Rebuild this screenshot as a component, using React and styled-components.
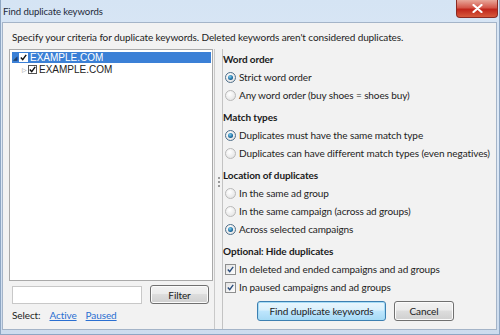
import React from "react";
import styled, { createGlobalStyle } from "styled-components";

const Global = createGlobalStyle`
  html, body { margin: 0; padding: 0; }
  body {
    width: 500px;
    height: 335px;
    overflow: hidden;
    background: #c9daee;
    font-family: Lato, "Noto Sans", sans-serif;
    letter-spacing: -0.1px;
  }
`;

const Window = styled.div`
  width: 500px;
  height: 335px;
  display: flex;
  flex-direction: column;
  background: linear-gradient(180deg, #d5e4f4 0%, #dfeaf7 40%, #cddcee 100%);
  box-sizing: border-box;
  border-left: 1px solid #8ea6c3;
  border-right: 1px solid #8ea6c3;
  border-bottom: 1px solid #8ea6c3;
`;

const TitleBar = styled.div`
  height: 22px;
  display: flex;
  align-items: center;
  justify-content: space-between;
  padding-left: 2px;
  font-size: 9.6px;
  color: #1e2a3a;
`;

const CloseButton = styled.div`
  width: 40px;
  height: 17px;
  margin: 0 1px 4px 0;
  border-radius: 0 0 4px 4px;
  border: 1px solid #8b2a22;
  border-top: none;
  background: linear-gradient(180deg, #e8a79a 0%, #d4574a 45%, #c0261b 55%, #d75a3c 100%);
  display: flex;
  align-items: center;
  justify-content: center;
`;

const Client = styled.div`
  flex: 1;
  margin: 0 2px 4px 1px;
  border: 1px solid #a4b4c8;
  background: #f2f2f2;
  display: flex;
  flex-direction: column;
  padding: 5px 0 0 0;
  min-height: 0;
`;

const Intro = styled.div`
  font-size: 10px;
  color: #222;
  padding-left: 9px;
  height: 19px;
  line-height: 19px;
  white-space: nowrap;
`;

const Body = styled.div`
  flex: 1;
  display: flex;
  padding: 2px 0 0 6px;
  min-height: 0;
`;

const LeftPanel = styled.div`
  width: 204px;
  display: flex;
  flex-direction: column;
`;

const Tree = styled.div`
  height: 232px;
  flex-shrink: 0;
  background: #fff;
  border: 1px solid #a9a9a9;
  padding: 2px 1px 0 2px;
  box-sizing: border-box;
  font-family: "Liberation Sans", Arial, sans-serif;
  font-size: 10px;
  letter-spacing: 0;
`;

const TreeRow = styled.div`
  height: 11px;
  display: flex;
  align-items: center;
  gap: 1px;
  padding-left: ${(p) => p.$depth * 9 + 1}px;
  margin-bottom: 1px;
  background: ${(p) => (p.$selected ? "#3b80d6" : "transparent")};
  color: ${(p) => (p.$selected ? "#fff" : "#222")};
  white-space: nowrap;
`;

const Arrow = styled.span`
  width: 5px;
  font-size: 6px;
  color: ${(p) => (p.$selected ? "#1d3f6e" : "#888")};
  line-height: 1;
`;

const TreeBox = styled.span`
  width: 9px;
  height: 9px;
  flex-shrink: 0;
  box-sizing: border-box;
  border: 1px solid ${(p) => (p.$selected ? "#fff" : "#555")};
  background: #fff;
  display: flex;
  align-items: center;
  justify-content: center;
  margin-right: 1px;
`;

const FilterRow = styled.div`
  display: flex;
  align-items: center;
  gap: 8px;
  margin-top: 4px;
  padding-left: 3px;
`;

const FilterInput = styled.div`
  width: 130px;
  height: 18px;
  background: #fff;
  border: 1px solid #c8c8c8;
  box-sizing: border-box;
`;

const Button = styled.div`
  width: ${(p) => p.$w}px;
  height: ${(p) => p.$h}px;
  flex-shrink: 0;
  box-sizing: border-box;
  border: 1px solid ${(p) => (p.$primary ? "#3c7fb1" : "#707070")};
  border-radius: 3px;
  box-shadow: inset 0 0 0 1px ${(p) => (p.$primary ? "#a6dcf6" : "#fbfbfb")};
  background: ${(p) =>
    p.$primary
      ? "linear-gradient(180deg, #eaf6fd 0%, #d9f0fc 45%, #bee6fd 50%, #a7d9f5 100%)"
      : "linear-gradient(180deg, #f2f2f2 0%, #ebebeb 45%, #dddddd 50%, #cfcfcf 100%)"};
  display: flex;
  align-items: center;
  justify-content: center;
  font-size: 10px;
  color: #222;
  white-space: nowrap;
`;

const SelectRow = styled.div`
  display: flex;
  align-items: center;
  gap: 9px;
  font-size: 10px;
  color: #222;
  padding-left: 3px;
  margin-top: 5px;
`;

const Link = styled.span`
  color: #2a6fd1;
  text-decoration: underline;
`;

const Splitter = styled.div`
  width: 7px;
  display: flex;
  flex-direction: column;
  align-items: center;
  justify-content: center;
  gap: 2px;
  padding-bottom: 14px;
  border-left: 1px solid #c9c9c9;
  margin-left: 1px;
`;

const Dot = styled.span`
  width: 2px;
  height: 2px;
  background: #9a9a9a;
`;

const RightPanel = styled.div`
  flex: 1;
  border-left: 1px solid #c3c3c3;
  padding: 1px 0 0 0;
  display: flex;
  flex-direction: column;
`;

const Heading = styled.div`
  font-weight: bold;
  font-size: 10px;
  color: #1a1a1a;
  height: 18px;
  line-height: 18px;
`;

const Option = styled.div`
  display: flex;
  align-items: center;
  gap: 3px;
  height: 18px;
  padding-left: 2px;
  font-size: 10px;
  color: #222;
  white-space: nowrap;
`;

const Section = styled.div`
  margin-bottom: 4px;
`;

const Radio = styled.span`
  width: 11px;
  height: 11px;
  flex-shrink: 0;
  box-sizing: border-box;
  border-radius: 50%;
  border: 1px solid ${(p) => (p.$on ? "#4f6f8a" : "#b9b9b9")};
  background: radial-gradient(circle at 40% 35%, #ffffff 0%, #e8e8e8 70%, #d6d6d6 100%);
  display: flex;
  align-items: center;
  justify-content: center;
  &::after {
    content: "";
    display: ${(p) => (p.$on ? "block" : "none")};
    width: 5px;
    height: 5px;
    border-radius: 50%;
    background: radial-gradient(circle at 40% 35%, #7fd0f0 0%, #1b6aa0 60%, #0d3f66 100%);
  }
`;

const Check = styled.span`
  width: 11px;
  height: 11px;
  flex-shrink: 0;
  box-sizing: border-box;
  border: 1px solid #8e8f8f;
  background: linear-gradient(135deg, #e3e3e3 0%, #fdfdfd 100%);
  display: flex;
  align-items: center;
  justify-content: center;
`;

const Footer = styled.div`
  display: flex;
  gap: 8px;
  padding-left: 34px;
  margin-top: 1px;
`;

const Tick = ({ color = "#2a4d7d" }) => (
  <svg width="7" height="7" viewBox="0 0 7 7">
    <path d="M0.8 3.6 L2.7 5.6 L6.2 0.8" fill="none" stroke={color} strokeWidth="1.4" />
  </svg>
);

export default function App() {
  return (
    <>
      <Global />
      <Window>
        <TitleBar>
          <span>Find duplicate keywords</span>
          <CloseButton>
            <svg width="11" height="9" viewBox="0 0 11 9">
              <path d="M1.5 1 L9.5 8 M9.5 1 L1.5 8" stroke="#fff" strokeWidth="2.2" strokeLinecap="round" />
            </svg>
          </CloseButton>
        </TitleBar>
        <Client>
          <Intro>Specify your criteria for duplicate keywords. Deleted keywords aren't considered duplicates.</Intro>
          <Body>
            <LeftPanel>
              <Tree>
                <TreeRow $depth={0} $selected>
                  <Arrow $selected>◢</Arrow>
                  <TreeBox $selected><Tick color="#111" /></TreeBox>
                  EXAMPLE.COM
                </TreeRow>
                <TreeRow $depth={1}>
                  <Arrow>▷</Arrow>
                  <TreeBox><Tick color="#111" /></TreeBox>
                  EXAMPLE.COM
                </TreeRow>
              </Tree>
              <FilterRow>
                <FilterInput />
                <Button $w={59} $h={19}>Filter</Button>
              </FilterRow>
              <SelectRow>
                <span>Select:</span>
                <Link>Active</Link>
                <Link>Paused</Link>
              </SelectRow>
            </LeftPanel>
            <Splitter>
              <Dot />
              <Dot />
              <Dot />
            </Splitter>
            <RightPanel>
              <Section>
                <Heading>Word order</Heading>
                <Option><Radio $on />Strict word order</Option>
                <Option><Radio />Any word order (buy shoes = shoes buy)</Option>
              </Section>
              <Section>
                <Heading>Match types</Heading>
                <Option><Radio $on />Duplicates must have the same match type</Option>
                <Option><Radio />Duplicates can have different match types (even negatives)</Option>
              </Section>
              <Section>
                <Heading>Location of duplicates</Heading>
                <Option><Radio />In the same ad group</Option>
                <Option><Radio />In the same campaign (across ad groups)</Option>
                <Option><Radio $on />Across selected campaigns</Option>
              </Section>
              <Section>
                <Heading>Optional: Hide duplicates</Heading>
                <Option><Check><Tick /></Check>In deleted and ended campaigns and ad groups</Option>
                <Option><Check><Tick /></Check>In paused campaigns and ad groups</Option>
              </Section>
              <Footer>
                <Button $primary $w={129} $h={20}>Find duplicate keywords</Button>
                <Button $w={60} $h={20}>Cancel</Button>
              </Footer>
            </RightPanel>
          </Body>
        </Client>
      </Window>
    </>
  );
}
